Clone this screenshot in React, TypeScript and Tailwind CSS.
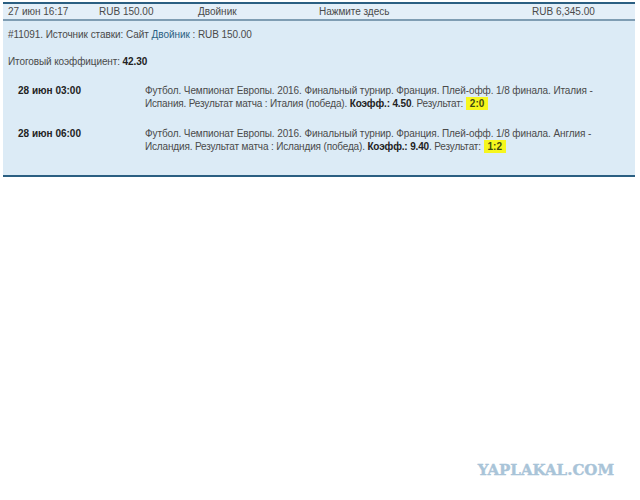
/**
 * Bet history row, expanded to show both legs of the double
 */

const legs = [
  {
    time: '28 июн 03:00',
    line1: 'Футбол. Чемпионат Европы. 2016. Финальный турнир. Франция. Плей-офф. 1/8 финала. Италия -',
    line2: 'Испания. Результат матча : Италия (победа).',
    odds: '4.50',
    score: '2:0',
  },
  {
    time: '28 июн 06:00',
    line1: 'Футбол. Чемпионат Европы. 2016. Финальный турнир. Франция. Плей-офф. 1/8 финала. Англия -',
    line2: 'Исландия. Результат матча : Исландия (победа).',
    odds: '9.40',
    score: '1:2',
  },
];

export default function App() {
  return (
    <div className="h-[500px] flex flex-col bg-white font-['Liberation_Sans',Arial,sans-serif] text-[10px] text-[#4a4a4a] pt-[2px] overflow-hidden">
      <div className="mx-[3px] w-[632px] border-t-2 border-b-2 border-t-[#2b5f82] border-b-[#2b5f82] bg-[#dcebf6]">
        {/* Summary row */}
        <div className="h-[17px] flex items-center pl-[5px] border-b-2 border-[#7f9db3] bg-[#e4eff8] leading-none">
          <span className="w-[91px]">27 июн 16:17</span>
          <span className="w-[99px]">RUB 150.00</span>
          <span className="w-[121px]">Двойник</span>
          <span className="w-[213px] tracking-[-0.03px]">Нажмите здесь</span>
          <span>RUB 6,345.00</span>
        </div>

        {/* Details */}
        <div className="pl-[5px] pt-[7px] pb-[22px] leading-[14px] tracking-[-0.1px]">
          <p className="tracking-[-0.06px]">
            #11091. Источник ставки: Сайт <span className="text-[#2b5f82]">Двойник</span> : RUB 150.00
          </p>
          <p className="mt-[13px]">
            Итоговый коэффициент: <b className="text-[#222]">42.30</b>
          </p>

          <div className="mt-[15px] flex flex-col gap-[17px]">
            {legs.map((leg) => (
              <div key={leg.time} className="flex">
                <b className="w-[137px] pl-[10px] text-[#222] tracking-normal">{leg.time}</b>
                <div className="leading-[13px] whitespace-nowrap">
                  <div>{leg.line1}</div>
                  <div className="tracking-[-0.16px]">
                    {leg.line2} <b className="text-[#222]">Коэфф.: {leg.odds}</b>. Результат:{' '}
                    <b className="px-[4px] py-[1px] bg-[#f6f61e] text-[#3f4a10] tracking-normal">{leg.score}</b>
                  </div>
                </div>
              </div>
            ))}
          </div>
        </div>
      </div>

      {/* Watermark */}
      <div className="mt-auto mb-[22px] pr-[26px] flex justify-end">
        <span className="font-['DejaVu_Serif',serif] font-bold text-[15px] leading-none text-[#a9c4d8] [-webkit-text-stroke:0.4px_#a9c4d8]">
          YAPLAKAL.COM
        </span>
      </div>
    </div>
  );
}
